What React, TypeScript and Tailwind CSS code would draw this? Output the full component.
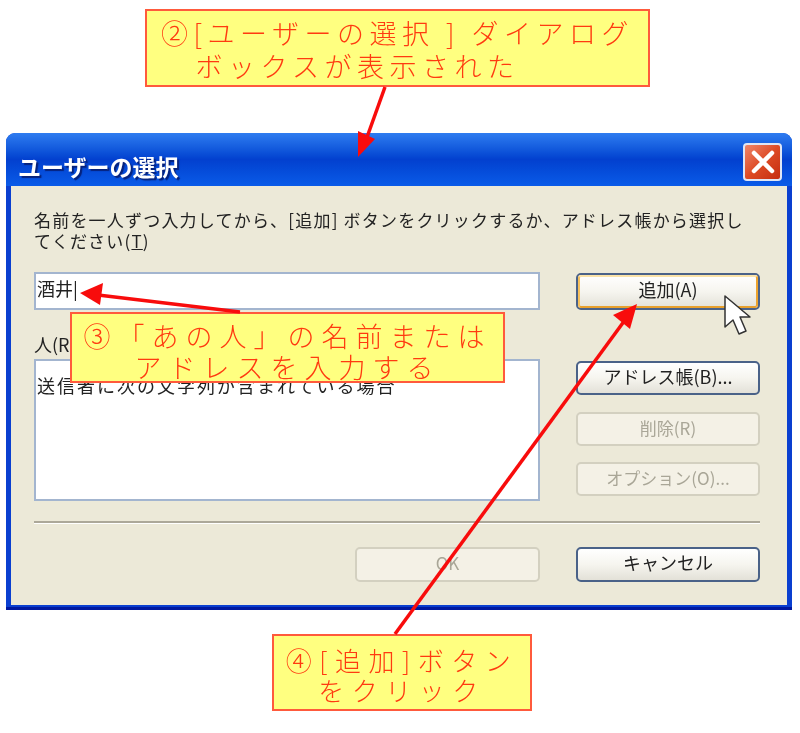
const jp = 'font-["Noto_Sans_CJK_JP","Noto_Sans",sans-serif]'

function Callout({ lines, className }: { lines: string[]; className: string }) {
  return (
    <div className={`bg-[#ffff80] border-2 border-[#ff5a3c] text-[#ff3a10] text-center font-light ${className}`}>
      {lines.map((l) => (
        <div key={l}>{l}</div>
      ))}
    </div>
  )
}

function Btn({ label, hot, off, className }: { label: string; hot?: boolean; off?: boolean; className: string }) {
  if (off) {
    return (
      <div className={`flex items-center justify-center rounded-[5px] border-2 border-[#d3d0c0] bg-[#f4f1e6] pb-[3px] text-[17px] text-[#a9a697] ${className}`}>
        {label}
      </div>
    )
  }
  return (
    <div className={`rounded-[5px] border-2 border-[#4a6288] bg-gradient-to-b from-white via-[#f6f5ef] to-[#e3e1d8] text-[18px] text-[#222] ${className}`}>
      <div className={`flex h-full items-center justify-center rounded-[3px] pb-[4px] ${hot ? 'border-2 border-t-[#fbe3a8] border-l-[#f6c05c] border-r-[#eda42e] border-b-[#e8a02c]' : ''}`}>
        {label}
      </div>
    </div>
  )
}

export default function App() {
  return (
    <div className={`relative flex h-[733px] w-[800px] flex-col overflow-hidden bg-white blur-[0.6px] ${jp}`}>
      <Callout
        lines={['②[ユーザーの選択 ] ダイアログ', 'ボックスが表示された']}
        className="ml-[145px] mt-[9px] h-[78px] w-[505px] pt-[5px] text-[27px] leading-[33px] tracking-[5.5px] [&>div:last-child]:pr-[80px]"
      />

      {/* dialog */}
      <div className="ml-[6px] mt-[46px] h-[477px] w-[786px] rounded-t-[9px] bg-[#0a3fd0] px-[5px] pb-[5px] shadow-[inset_0_-3px_0_#0018a0]">
        <div className="-mx-[5px] flex h-[53px] items-center justify-between rounded-t-[9px] bg-gradient-to-b from-[#2f7cf0] via-[#0340cf] via-50% to-[#0b5be8] pl-[12px] pr-[10px] pt-[4px]">
          <span className="pt-[10px] text-[23px] font-bold text-white [text-shadow:2px_2px_1px_#06227c]">ユーザーの選択</span>
          <div className="flex h-[38px] w-[39px] items-center justify-center rounded-[4px] border-2 border-[#dfe6f5] bg-gradient-to-br from-[#ef8468] via-[#dd4a24] to-[#c52c10]">
            <svg width="26" height="26" viewBox="0 0 26 26">
              <path d="M4 4 L22 22 M22 4 L4 22" stroke="#fff" strokeWidth="4.5" strokeLinecap="round" />
            </svg>
          </div>
        </div>

        <div className="h-[419px] bg-[#ece9d8] px-[23px] pt-[23px] text-[#222]">
          <p className="h-[63px] w-[716px] text-[17px] leading-[21px] tracking-[1.2px]">
            名前を一人ずつ入力してから、[追加] ボタンをクリックするか、アドレス帳から選択してください(<span className="underline">T</span>)
          </p>

          <div className="flex gap-[36px]">
            <div className="w-[506px]">
              <div className="flex h-[38px] items-center border-2 border-[#a3b5cf] bg-white pb-[6px] pl-[1px] text-[18px]">酒井|</div>
              <div className="mt-[20px] h-[29px] text-[18px] leading-[29px]">人(R):</div>
              <div className="h-[142px] border-2 border-[#a3b5cf] bg-white pt-[12px] pl-[1px] text-[18px] leading-[24px] tracking-[2px]">
                送信者に次の文字列が含まれている場合
              </div>
            </div>
            <div className="w-[184px] pt-px">
              <Btn label="追加(A)" hot className="h-[37px]" />
              <Btn label="アドレス帳(B)..." className="mt-[51px] h-[34px]" />
              <Btn label="削除(R)" off className="mt-[17px] h-[34px]" />
              <Btn label="オプション(O)..." off className="mt-[16px] h-[34px]" />
            </div>
          </div>

          <div className="mt-[20px] h-[2px] w-[726px] bg-[#aca899] shadow-[0_1px_0_#fff]" />

          <div className="mt-[24px] flex w-[726px] justify-end gap-[36px]">
            <Btn label="OK" off className="h-[35px] w-[185px]" />
            <Btn label="キャンセル" className="h-[35px] w-[184px]" />
          </div>
        </div>
      </div>

      <Callout
        lines={['④[追加]ボタン', 'をクリック']}
        className="ml-[272px] mt-[24px] h-[77px] w-[260px] pt-[9px] text-[26px] leading-[30px] tracking-[7.5px]"
      />

      <Callout
        lines={['③「あの人」の名前または', 'アドレスを入力する']}
        className="absolute left-[70px] top-[312px] h-[71px] w-[435px] pt-[6px] text-[27px] leading-[31px] tracking-[7px]"
      />

      {/* arrows and cursor drawn over the dialog */}
      <svg className="absolute left-0 top-0" width="800" height="733" viewBox="0 0 800 733">
        <g fill="none" stroke="#f80c0c" strokeWidth="3.5">
          <path d="M385 87 L366 140" />
          <path d="M240 312 L98 295" />
          <path d="M395 634 L625 320" />
        </g>
        <g fill="#f80c0c">
          <path d="M358 157 L358 131 L375 139 Z" />
          <path d="M80 293 L103 283 L100 305 Z" />
          <path d="M637 304 L630 329 L613 315 Z" />
        </g>
        <path
          d="M725 296 L725 327 L733 320 L739 334 L746 331 L740 317 L750 317 Z"
          fill="#fff"
          stroke="#333"
          strokeWidth="1.5"
          strokeLinejoin="round"
        />
      </svg>
    </div>
  )
}
